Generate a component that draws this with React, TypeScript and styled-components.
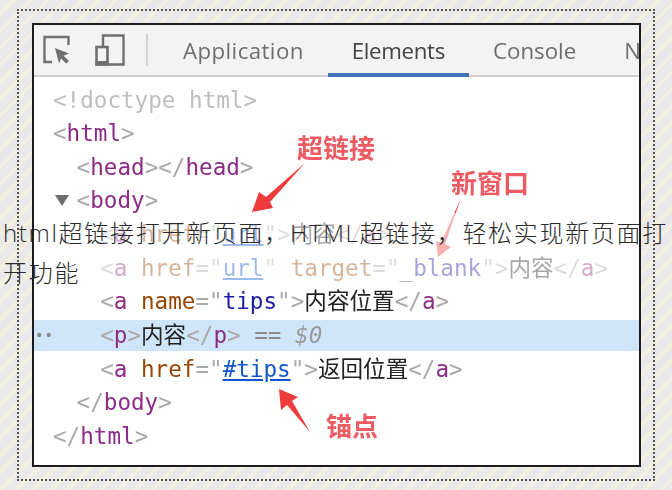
import styled, { createGlobalStyle } from "styled-components";

const GlobalStyle = createGlobalStyle`
    html, body {
        margin: 0;
        padding: 0;
    }
`

const monoStack = `"DejaVu Sans Mono", "Noto Sans CJK SC", monospace`

type Piece = { kind: keyof typeof tokenColors; text: string }

const tokenColors = {
    punct: "#a9a9a9",
    tag: "#8c2a86",
    attr: "#994500",
    value: "#1a1aa6",
    link: "#1155cc",
    text: "#222222",
    doctype: "#bdbdbd",
    eq: "#8a8a8a",
    ref: "#999999",
}

const p = (text: string): Piece => ({ kind: "punct", text })
const t = (text: string): Piece => ({ kind: "tag", text })
const a = (text: string): Piece => ({ kind: "attr", text })
const v = (text: string): Piece => ({ kind: "value", text })
const l = (text: string): Piece => ({ kind: "link", text })
const x = (text: string): Piece => ({ kind: "text", text })

const lines: { level: number; pieces: Piece[]; open?: boolean; selected?: boolean }[] = [
    { level: 0, pieces: [{ kind: "doctype", text: "<!doctype html>" }] },
    { level: 0, pieces: [p("<"), t("html"), p(">")] },
    { level: 1, pieces: [p("<"), t("head"), p("></"), t("head"), p(">")] },
    { level: 1, open: true, pieces: [p("<"), t("body"), p(">")] },
    { level: 2, pieces: [p("<"), t("a"), p(" "), a("href"), p('="'), l("url"), p('">'), x("内容"), p("</"), t("a"), p(">")] },
    { level: 2, pieces: [p("<"), t("a"), p(" "), a("href"), p('="'), l("url"), p('" '), a("target"), p('="'), v("_blank"), p('">'), x("内容"), p("</"), t("a"), p(">")] },
    { level: 2, pieces: [p("<"), t("a"), p(" "), a("name"), p('="'), v("tips"), p('">'), x("内容位置"), p("</"), t("a"), p(">")] },
    { level: 2, selected: true, pieces: [p("<"), t("p"), p(">"), x("内容"), p("</"), t("p"), p(">"), { kind: "eq", text: " == " }, { kind: "ref", text: "$0" }] },
    { level: 2, pieces: [p("<"), t("a"), p(" "), a("href"), p('="'), l("#tips"), p('">'), x("返回位置"), p("</"), t("a"), p(">")] },
    { level: 1, pieces: [p("</"), t("body"), p(">")] },
    { level: 0, pieces: [p("</"), t("html"), p(">")] },
]

export default function App() {
    return (
        <Page>
            <GlobalStyle />
            <Frame>
                <Panel>
                    <Toolbar>
                        <ToolIcon width="30" height="32" viewBox="0 0 30 32">
                            <path d="M9 28H1.5V3h24v8" fill="none" stroke="#6f6f6f" strokeWidth="2.4" />
                            <path d="M12 14l14 5.5-5.5 2.3 5.5 5.2-2.6 2.6-5.4-5.2-2 5.2z" fill="#6f6f6f" />
                        </ToolIcon>
                        <ToolIcon width="30" height="32" viewBox="0 0 30 32">
                            <path d="M8 12V1.5h20.5v29H13" fill="none" stroke="#6f6f6f" strokeWidth="2.4" />
                            <rect x="1.5" y="13" width="11" height="17.5" fill="none" stroke="#6f6f6f" strokeWidth="2.6" />
                            <rect x="0.5" y="27" width="13" height="4.5" fill="#6f6f6f" />
                        </ToolIcon>
                        <ToolDivider />
                        <Tab $track={0.4}>Application</Tab>
                        <Tab $active $track={-0.35}>Elements</Tab>
                        <Tab>Console</Tab>
                        <Tab>N</Tab>
                    </Toolbar>
                    <Tree>
                        {lines.map((line, i) => (
                            <Line key={i} $level={line.level} $selected={line.selected}>
                                {line.selected && <Dots>••</Dots>}
                                {line.open && <Twisty />}
                                {line.pieces.map((piece, j) => (
                                    <Token key={j} $kind={piece.kind}>{piece.text}</Token>
                                ))}
                            </Line>
                        ))}
                    </Tree>
                    <Arrows width="606" height="440" viewBox="34 25 606 440">
                        <polygon points="305,163 270,202 273,208 252,212 259,192 266,197" fill="#ef3b3b" />
                        <polygon points="461,198 445,244 451,247 438,257 436,241 441,243" fill="#ef3b3b" />
                        <polygon points="279,389 298,397 292,401 310,432 287,405 281,410" fill="#ef3b3b" />
                    </Arrows>
                    <Note $left={263} $top={105}>超链接</Note>
                    <Note $left={417} $top={140}>新窗口</Note>
                    <Note $left={292} $top={383}>锚点</Note>
                    <Fade />
                </Panel>
            </Frame>
            <Title>html超链接打开新页面，HTML超链接，轻松实现新页面打开功能</Title>
        </Page>
    );
}

const Page = styled.div`
    position: relative;
    box-sizing: border-box;
    width: 672px;
    height: 490px;
    padding: 9px 17px 9px 17px;
    background: repeating-linear-gradient(135deg, #e9e9e9 0 8px, #f3efe1 8px 12px);
    overflow: hidden;
`

const Frame = styled.div`
    box-sizing: border-box;
    height: 100%;
    padding: 12px 12px 12px 13px;
    border: 2px dotted #555;
`

const Panel = styled.div`
    position: relative;
    box-sizing: border-box;
    height: 100%;
    background: #fff;
    border: 2px solid #1c1c1c;
    overflow: hidden;
    filter: blur(0.6px);
`

const Toolbar = styled.div`
    display: flex;
    align-items: center;
    box-sizing: border-box;
    height: 52px;
    padding-left: 9px;
    background: #f3f3f3;
    border-bottom: 2px solid #cfcfcf;
`

const ToolIcon = styled.svg`
    flex: none;
    margin-right: 21.5px;
`

const ToolDivider = styled.div`
    flex: none;
    width: 2px;
    height: 32px;
    margin: 0 11px 0 0;
    background: #d4d4d4;
`

const Tab = styled.div<{ $active?: boolean; $track?: number }>`
    flex: none;
    align-self: stretch;
    display: flex;
    align-items: center;
    box-sizing: border-box;
    height: 52px;
    padding: 3px 24px 0;
    font-family: "Open Sans", "Noto Sans", sans-serif;
    font-size: 22.3px;
    letter-spacing: ${props => props.$track ?? 0}px;
    color: ${props => props.$active ? "#444" : "#6e6e6e"};
    border-bottom: 4px solid ${props => props.$active ? "#3f74b5" : "transparent"};
`

const Tree = styled.div`
    display: flex;
    flex-direction: column;
    padding-top: 7.5px;
`

const Line = styled.div<{ $level: number; $selected?: boolean }>`
    position: relative;
    height: 31.5px;
    margin-bottom: 2.15px;
    line-height: 31.5px;
    padding-left: ${props => 19 + props.$level * 23.6}px;
    white-space: pre;
    font-family: ${monoStack};
    font-size: 22.6px;
    background: ${props => props.$selected ? "#cfe6fa" : "transparent"};
`

const Token = styled.span<{ $kind: keyof typeof tokenColors }>`
    color: ${props => tokenColors[props.$kind]};
    text-decoration: ${props => props.$kind === "link" ? "underline" : "none"};
    font-style: ${props => props.$kind === "ref" ? "italic" : "normal"};
`

const Dots = styled.span`
    position: absolute;
    left: 1px;
    top: 0;
    font-size: 14px;
    letter-spacing: 1px;
    color: #888;
`

const Twisty = styled.span`
    position: absolute;
    left: 21px;
    top: 10px;
    border-left: 7px solid transparent;
    border-right: 7px solid transparent;
    border-top: 11px solid #6e6e6e;
`

const Arrows = styled.svg`
    position: absolute;
    left: 0;
    top: 0;
`

const Note = styled.div<{ $left: number; $top: number }>`
    position: absolute;
    left: ${props => props.$left}px;
    top: ${props => props.$top}px;
    font-family: "Noto Sans CJK SC", sans-serif;
    font-size: 26px;
    line-height: 34px;
    font-weight: 700;
    color: #ec5a62;
`

const Fade = styled.div`
    position: absolute;
    left: 0;
    right: 0;
    top: 188px;
    height: 75px;
    background: rgba(255, 255, 255, 0.6);
`

const Title = styled.div`
    position: absolute;
    left: 0;
    right: 0;
    top: 213px;
    padding: 0 3px;
    font-family: "Open Sans", "Noto Sans CJK SC Light", "Noto Sans CJK SC", sans-serif;
    font-size: 24px;
    font-weight: 300;
    letter-spacing: 1.7px;
    line-height: 40px;
    color: #2a2a2a;
`
